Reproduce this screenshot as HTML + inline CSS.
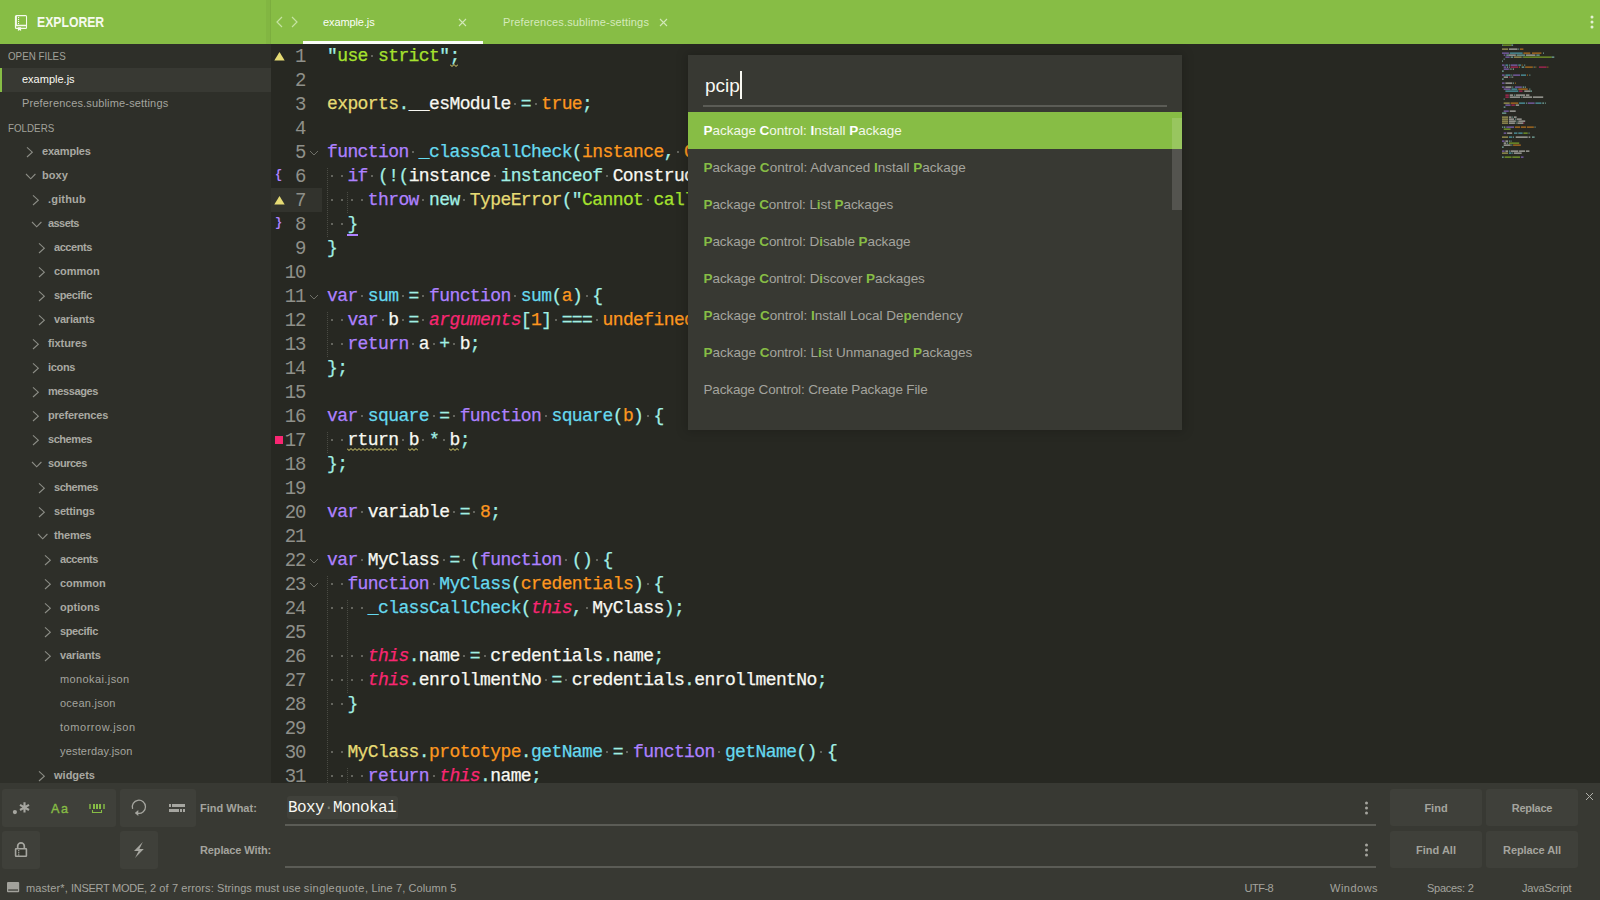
<!DOCTYPE html><html><head><meta charset="utf-8"><title>example.js</title><style>
*{margin:0;padding:0;box-sizing:border-box}
html,body{width:1600px;height:900px;overflow:hidden;background:#272822}
body{position:relative;font-family:"Liberation Sans",sans-serif;font-size:11px;color:#a4a49e}
.abs{position:absolute}
#top{left:0;top:0;width:1600px;height:44px;background:#87bd45}
#side{left:0;top:44px;width:271px;height:739px;background:#2e2f29;overflow:hidden}
#side .r{position:absolute;left:0;width:271px;height:24px;line-height:24px;white-space:nowrap}
#side .h{font-size:11px;color:#a2a29b;transform:scaleX(0.89);transform-origin:8px 50%}
#side .d{font-weight:bold;color:#a9a9a2}
#side .fl{color:#a4a49e}
#side .of{color:#a4a49e;letter-spacing:0.16px}
#side .sel{color:#f8f8f2;letter-spacing:0}
#side svg{position:absolute;top:0}
#ed{left:271px;top:44px;width:1329px;height:739px;background:#272822;overflow:hidden}
.ln{position:absolute;left:0;height:24px;line-height:24px;white-space:pre;font-family:"Liberation Mono",monospace;font-size:18px;letter-spacing:-0.6px}
.num{width:34.2px;text-align:right;color:#8f908a;font-size:19px;letter-spacing:-1.2px;transform:scaleY(1.06);transform-origin:50% 17px}
.code{left:56px;color:#f8f8f2;-webkit-text-stroke:0.25px}
.k{color:#ae81ff}.f{color:#66d9ef}.p{color:#fd971f}.s{color:#a6e22e}.y{color:#e6db74}
.c{color:#a1efe4}.t{color:#f92672;font-style:italic}.w{color:#f8f8f2}
.sp{color:#55564f}
#find{left:0;top:783px;width:1600px;height:93px;background:#383933}
#status{left:0;top:876px;width:1600px;height:24px;background:#383933;line-height:24px;color:#a4a49e}
.btn{position:absolute;background:#3f403a;border-radius:3px}
.bt{position:absolute;height:37px;line-height:39px;overflow:hidden;text-align:center;font-weight:bold;color:#a4a49e;background:#3f403a;border-radius:3px;width:92px}
.lbl{position:absolute;font-weight:bold;color:#a4a49e;left:200px;height:20px;line-height:20px}
.ul{position:absolute;left:285px;width:1091px;height:2px;background:#5b5c56}
#pal{left:688px;top:55px;width:494px;height:375px;background:#383933;box-shadow:0 0 10px 2px rgba(0,0,0,0.17);overflow:hidden}
#pal .row{position:absolute;left:0;width:494px;height:37px;line-height:37px;padding-left:15.5px;font-size:13.5px;color:#a4a49e;white-space:nowrap}
#pal .row b{color:#87bd45}
#pal .row.sel{background:#87bd45;color:#f3f8ea}
#pal .row.sel b{color:#fff}
</style></head><body>
<div id="top" class="abs">
<div class="abs" style="left:266px;top:0;width:5px;height:44px;background:rgba(0,0,0,0.035)"></div><div class="abs" style="left:270px;top:0;width:1px;height:44px;background:rgba(0,0,0,0.04)"></div>
<svg class="abs" style="left:14px;top:14px" width="14" height="18" viewBox="0 0 14 18"><g fill="#f6faef"><path fill-rule="evenodd" d="M2.4 0.9H11.6Q13.05 0.9 13.05 2.4V13.6Q13.05 15.1 11.6 15.1H2.4Q0.9 15.1 0.9 13.6V2.4Q0.9 0.9 2.4 0.9ZM2.9 2.2V10.7H12V2.2ZM2.1 12.2V13.8H12V12.2Z"/><rect x="4" y="3" width="1.1" height="1.1"/><rect x="4" y="5" width="1.1" height="1.1"/><rect x="4" y="7" width="1.1" height="1.1"/><rect x="4" y="9" width="1.1" height="1.1"/><path d="M3.9 13.3H7.1V17.1L5.5 15.9L3.9 17.1Z"/></g></svg>
<div class="abs" style="left:36.5px;top:12px;height:20px;line-height:20px;font-size:14px;font-weight:bold;color:#f6faef;transform:scaleX(0.872);transform-origin:0 50%">EXPLORER</div>
<svg class="abs" style="left:275px;top:16px" width="26" height="12" viewBox="0 0 26 12"><g fill="none" stroke="#c5e2a3" stroke-width="1.2"><path d="M7 1L2 6l5 5"/><path d="M17 1l5 5l-5 5"/></g></svg>
<div class="abs" style="left:323px;top:12px;height:20px;line-height:20px;font-size:11px;color:#fbfdf8;letter-spacing:-0.1px">example.js</div>
<svg class="abs" style="left:458px;top:18px" width="9" height="9" viewBox="0 0 9 9"><path d="M1 1l7 7M8 1l-7 7" stroke="#d2e8b8" stroke-width="1.1" fill="none"/></svg>
<div class="abs" style="left:303px;top:41px;width:180px;height:3px;background:#fbfdf8"></div>
<div class="abs" style="left:503px;top:12px;height:20px;line-height:20px;font-size:11px;color:#d5eabc;letter-spacing:0.15px">Preferences.sublime-settings</div>
<svg class="abs" style="left:659px;top:18px" width="9" height="9" viewBox="0 0 9 9"><path d="M1 1l7 7M8 1l-7 7" stroke="#d2e8b8" stroke-width="1.1" fill="none"/></svg>
<svg class="abs" style="left:1588.5px;top:13.5px" width="6" height="16" viewBox="0 0 6 16"><g fill="#e4f1d4"><circle cx="3" cy="3" r="1.5"/><circle cx="3" cy="8" r="1.5"/><circle cx="3" cy="13" r="1.5"/></g></svg>
</div>
<div id="side" class="abs">
<div class="abs" style="left:0;top:24px;width:271px;height:24px;background:#383933"></div><div class="abs" style="left:0;top:24px;width:2px;height:24px;background:#87bd45"></div>
<div class="r h" style="top:0px;padding-left:8px">OPEN FILES</div>
<div class="r of sel" style="top:23px;padding-left:22px">example.js</div>
<div class="r of" style="top:47px;padding-left:22px">Preferences.sublime-settings</div>
<div class="r h h2" style="top:72px;padding-left:8px">FOLDERS</div>
<div class="r d" style="top:95px;padding-left:42px;letter-spacing:-0.181px"><svg style="left:26.4px" width="8" height="24" viewBox="0 0 8 24"><path d="M1 8.4l5.3 4.8l-5.3 4.8" fill="none" stroke="#8c8d86" stroke-width="1.1"/></svg>examples</div>
<div class="r d" style="top:119px;padding-left:42px;letter-spacing:0.089px"><svg style="left:24.5px" width="12" height="24" viewBox="0 0 12 24"><path d="M1 11l4.7 4.8l4.7 -4.8" fill="none" stroke="#8c8d86" stroke-width="1.1"/></svg>boxy</div>
<div class="r d" style="top:143px;padding-left:48px;letter-spacing:0.176px"><svg style="left:32.4px" width="8" height="24" viewBox="0 0 8 24"><path d="M1 8.4l5.3 4.8l-5.3 4.8" fill="none" stroke="#8c8d86" stroke-width="1.1"/></svg>.github</div>
<div class="r d" style="top:167px;padding-left:48px;letter-spacing:-0.576px"><svg style="left:30.5px" width="12" height="24" viewBox="0 0 12 24"><path d="M1 11l4.7 4.8l4.7 -4.8" fill="none" stroke="#8c8d86" stroke-width="1.1"/></svg>assets</div>
<div class="r d" style="top:191px;padding-left:54px;letter-spacing:-0.444px"><svg style="left:38.4px" width="8" height="24" viewBox="0 0 8 24"><path d="M1 8.4l5.3 4.8l-5.3 4.8" fill="none" stroke="#8c8d86" stroke-width="1.1"/></svg>accents</div>
<div class="r d" style="top:215px;padding-left:54px;letter-spacing:-0.026px"><svg style="left:38.4px" width="8" height="24" viewBox="0 0 8 24"><path d="M1 8.4l5.3 4.8l-5.3 4.8" fill="none" stroke="#8c8d86" stroke-width="1.1"/></svg>common</div>
<div class="r d" style="top:239px;padding-left:54px;letter-spacing:-0.383px"><svg style="left:38.4px" width="8" height="24" viewBox="0 0 8 24"><path d="M1 8.4l5.3 4.8l-5.3 4.8" fill="none" stroke="#8c8d86" stroke-width="1.1"/></svg>specific</div>
<div class="r d" style="top:263px;padding-left:54px;letter-spacing:-0.187px"><svg style="left:38.4px" width="8" height="24" viewBox="0 0 8 24"><path d="M1 8.4l5.3 4.8l-5.3 4.8" fill="none" stroke="#8c8d86" stroke-width="1.1"/></svg>variants</div>
<div class="r d" style="top:287px;padding-left:48px;letter-spacing:-0.087px"><svg style="left:32.4px" width="8" height="24" viewBox="0 0 8 24"><path d="M1 8.4l5.3 4.8l-5.3 4.8" fill="none" stroke="#8c8d86" stroke-width="1.1"/></svg>fixtures</div>
<div class="r d" style="top:311px;padding-left:48px;letter-spacing:-0.319px"><svg style="left:32.4px" width="8" height="24" viewBox="0 0 8 24"><path d="M1 8.4l5.3 4.8l-5.3 4.8" fill="none" stroke="#8c8d86" stroke-width="1.1"/></svg>icons</div>
<div class="r d" style="top:335px;padding-left:48px;letter-spacing:-0.416px"><svg style="left:32.4px" width="8" height="24" viewBox="0 0 8 24"><path d="M1 8.4l5.3 4.8l-5.3 4.8" fill="none" stroke="#8c8d86" stroke-width="1.1"/></svg>messages</div>
<div class="r d" style="top:359px;padding-left:48px;letter-spacing:-0.207px"><svg style="left:32.4px" width="8" height="24" viewBox="0 0 8 24"><path d="M1 8.4l5.3 4.8l-5.3 4.8" fill="none" stroke="#8c8d86" stroke-width="1.1"/></svg>preferences</div>
<div class="r d" style="top:383px;padding-left:48px;letter-spacing:-0.445px"><svg style="left:32.4px" width="8" height="24" viewBox="0 0 8 24"><path d="M1 8.4l5.3 4.8l-5.3 4.8" fill="none" stroke="#8c8d86" stroke-width="1.1"/></svg>schemes</div>
<div class="r d" style="top:407px;padding-left:48px;letter-spacing:-0.477px"><svg style="left:30.5px" width="12" height="24" viewBox="0 0 12 24"><path d="M1 11l4.7 4.8l4.7 -4.8" fill="none" stroke="#8c8d86" stroke-width="1.1"/></svg>sources</div>
<div class="r d" style="top:431px;padding-left:54px;letter-spacing:-0.445px"><svg style="left:38.4px" width="8" height="24" viewBox="0 0 8 24"><path d="M1 8.4l5.3 4.8l-5.3 4.8" fill="none" stroke="#8c8d86" stroke-width="1.1"/></svg>schemes</div>
<div class="r d" style="top:455px;padding-left:54px;letter-spacing:-0.185px"><svg style="left:38.4px" width="8" height="24" viewBox="0 0 8 24"><path d="M1 8.4l5.3 4.8l-5.3 4.8" fill="none" stroke="#8c8d86" stroke-width="1.1"/></svg>settings</div>
<div class="r d" style="top:479px;padding-left:54px;letter-spacing:-0.206px"><svg style="left:36.5px" width="12" height="24" viewBox="0 0 12 24"><path d="M1 11l4.7 4.8l4.7 -4.8" fill="none" stroke="#8c8d86" stroke-width="1.1"/></svg>themes</div>
<div class="r d" style="top:503px;padding-left:60px;letter-spacing:-0.444px"><svg style="left:44.4px" width="8" height="24" viewBox="0 0 8 24"><path d="M1 8.4l5.3 4.8l-5.3 4.8" fill="none" stroke="#8c8d86" stroke-width="1.1"/></svg>accents</div>
<div class="r d" style="top:527px;padding-left:60px;letter-spacing:-0.026px"><svg style="left:44.4px" width="8" height="24" viewBox="0 0 8 24"><path d="M1 8.4l5.3 4.8l-5.3 4.8" fill="none" stroke="#8c8d86" stroke-width="1.1"/></svg>common</div>
<div class="r d" style="top:551px;padding-left:60px;letter-spacing:0.043px"><svg style="left:44.4px" width="8" height="24" viewBox="0 0 8 24"><path d="M1 8.4l5.3 4.8l-5.3 4.8" fill="none" stroke="#8c8d86" stroke-width="1.1"/></svg>options</div>
<div class="r d" style="top:575px;padding-left:60px;letter-spacing:-0.383px"><svg style="left:44.4px" width="8" height="24" viewBox="0 0 8 24"><path d="M1 8.4l5.3 4.8l-5.3 4.8" fill="none" stroke="#8c8d86" stroke-width="1.1"/></svg>specific</div>
<div class="r d" style="top:599px;padding-left:60px;letter-spacing:-0.187px"><svg style="left:44.4px" width="8" height="24" viewBox="0 0 8 24"><path d="M1 8.4l5.3 4.8l-5.3 4.8" fill="none" stroke="#8c8d86" stroke-width="1.1"/></svg>variants</div>
<div class="r fl" style="top:623px;padding-left:60px;letter-spacing:0.398px">monokai.json</div>
<div class="r fl" style="top:647px;padding-left:60px;letter-spacing:0.251px">ocean.json</div>
<div class="r fl" style="top:671px;padding-left:60px;letter-spacing:0.545px">tomorrow.json</div>
<div class="r fl" style="top:695px;padding-left:60px;letter-spacing:0.170px">yesterday.json</div>
<div class="r d" style="top:719px;padding-left:54px;letter-spacing:0.007px"><svg style="left:38.4px" width="8" height="24" viewBox="0 0 8 24"><path d="M1 8.4l5.3 4.8l-5.3 4.8" fill="none" stroke="#8c8d86" stroke-width="1.1"/></svg>widgets</div>
</div>
<div id="ed" class="abs">
<div class="abs" style="left:0;top:144px;width:51px;height:24px;background:#32332d"></div>
<div class="ln num" style="top:1px">1</div>
<div class="ln code" style="top:0px"><span class="c">&quot;</span><span class="s">use strict</span><span class="c">&quot;;</span></div>
<div class="ln num" style="top:25px">2</div>
<div class="ln num" style="top:49px">3</div>
<div class="ln code" style="top:48px"><span class="y">exports</span><span class="c">.</span><span class="w">__esModule</span><span class="c"> = </span><span class="p">true</span><span class="c">;</span></div>
<div class="ln num" style="top:73px">4</div>
<div class="ln num" style="top:97px">5</div>
<div class="ln code" style="top:96px"><span class="k">function</span> <span class="f">_classCallCheck</span><span class="c">(</span><span class="p">instance</span><span class="c">, </span><span class="p">Constructor</span><span class="c">) {</span></div>
<div class="ln num" style="top:121px">6</div>
<div class="ln code" style="top:120px">  <span class="k">if</span><span class="c"> (!(</span><span class="w">instance</span><span class="c"> instanceof </span><span class="w">Constructor</span><span class="c">)) {</span></div>
<div class="ln num" style="top:145px">7</div>
<div class="ln code" style="top:144px">    <span class="k">throw</span><span class="c"> new </span><span class="y">TypeError</span><span class="c">(&quot;</span><span class="s">Cannot call a class as a function</span><span class="c">&quot;);</span></div>
<div class="ln num" style="top:169px">8</div>
<div class="ln code" style="top:168px">  <span class="c ub">}</span></div>
<div class="ln num" style="top:193px">9</div>
<div class="ln code" style="top:192px"><span class="c">}</span></div>
<div class="ln num" style="top:217px">10</div>
<div class="ln num" style="top:241px">11</div>
<div class="ln code" style="top:240px"><span class="k">var</span> <span class="f">sum</span><span class="c"> = </span><span class="k">function</span> <span class="f">sum</span><span class="c">(</span><span class="p">a</span><span class="c">) {</span></div>
<div class="ln num" style="top:265px">12</div>
<div class="ln code" style="top:264px">  <span class="k">var</span> <span class="w">b</span><span class="c"> = </span><span class="t">arguments</span><span class="c">[</span><span class="p">1</span><span class="c">] === </span><span class="p">undefined</span><span class="c"> ? </span><span class="p">2</span><span class="c"> : </span><span class="t">arguments</span><span class="c">[</span><span class="p">1</span><span class="c">];</span></div>
<div class="ln num" style="top:289px">13</div>
<div class="ln code" style="top:288px">  <span class="k">return</span> <span class="w">a</span><span class="c"> + </span><span class="w">b</span><span class="c">;</span></div>
<div class="ln num" style="top:313px">14</div>
<div class="ln code" style="top:312px"><span class="c">};</span></div>
<div class="ln num" style="top:337px">15</div>
<div class="ln num" style="top:361px">16</div>
<div class="ln code" style="top:360px"><span class="k">var</span> <span class="f">square</span><span class="c"> = </span><span class="k">function</span> <span class="f">square</span><span class="c">(</span><span class="p">b</span><span class="c">) {</span></div>
<div class="ln num" style="top:385px">17</div>
<div class="ln code" style="top:384px">  <span class="w sq">rturn</span> <span class="w sq">b</span><span class="c"> * </span><span class="w sq">b</span><span class="c">;</span></div>
<div class="ln num" style="top:409px">18</div>
<div class="ln code" style="top:408px"><span class="c">};</span></div>
<div class="ln num" style="top:433px">19</div>
<div class="ln num" style="top:457px">20</div>
<div class="ln code" style="top:456px"><span class="k">var</span> <span class="w">variable</span><span class="c"> = </span><span class="p">8</span><span class="c">;</span></div>
<div class="ln num" style="top:481px">21</div>
<div class="ln num" style="top:505px">22</div>
<div class="ln code" style="top:504px"><span class="k">var</span> <span class="w">MyClass</span><span class="c"> = (</span><span class="k">function</span><span class="c"> () {</span></div>
<div class="ln num" style="top:529px">23</div>
<div class="ln code" style="top:528px">  <span class="k">function</span> <span class="f">MyClass</span><span class="c">(</span><span class="p">credentials</span><span class="c">) {</span></div>
<div class="ln num" style="top:553px">24</div>
<div class="ln code" style="top:552px">    <span class="f">_classCallCheck</span><span class="c">(</span><span class="t">this</span><span class="c">, </span><span class="w">MyClass</span><span class="c">);</span></div>
<div class="ln num" style="top:577px">25</div>
<div class="ln num" style="top:601px">26</div>
<div class="ln code" style="top:600px">    <span class="t">this</span><span class="c">.</span><span class="w">name</span><span class="c"> = </span><span class="w">credentials</span><span class="c">.</span><span class="w">name</span><span class="c">;</span></div>
<div class="ln num" style="top:625px">27</div>
<div class="ln code" style="top:624px">    <span class="t">this</span><span class="c">.</span><span class="w">enrollmentNo</span><span class="c"> = </span><span class="w">credentials</span><span class="c">.</span><span class="w">enrollmentNo</span><span class="c">;</span></div>
<div class="ln num" style="top:649px">28</div>
<div class="ln code" style="top:648px">  <span class="c">}</span></div>
<div class="ln num" style="top:673px">29</div>
<div class="ln num" style="top:697px">30</div>
<div class="ln code" style="top:696px">  <span class="y">MyClass</span><span class="c">.</span><span class="p">prototype</span><span class="c">.</span><span class="f">getName</span><span class="c"> = </span><span class="k">function</span> <span class="f">getName</span><span class="c">() {</span></div>
<div class="ln num" style="top:721px">31</div>
<div class="ln code" style="top:720px">    <span class="k">return</span> <span class="t">this</span><span class="c">.</span><span class="w">name</span><span class="c">;</span></div>
<div class="abs" style="left:56px;top:124px;width:1px;height:69px;background:repeating-linear-gradient(to bottom,#4a4b44 0,#4a4b44 1px,transparent 1px,transparent 2px)"></div>
<div class="abs" style="left:76px;top:148px;width:1px;height:21px;background:repeating-linear-gradient(to bottom,#4a4b44 0,#4a4b44 1px,transparent 1px,transparent 2px)"></div>
<div class="abs" style="left:56px;top:268px;width:1px;height:45px;background:repeating-linear-gradient(to bottom,#4a4b44 0,#4a4b44 1px,transparent 1px,transparent 2px)"></div>
<div class="abs" style="left:56px;top:388px;width:1px;height:21px;background:repeating-linear-gradient(to bottom,#4a4b44 0,#4a4b44 1px,transparent 1px,transparent 2px)"></div>
<div class="abs" style="left:56px;top:532px;width:1px;height:213px;background:repeating-linear-gradient(to bottom,#4a4b44 0,#4a4b44 1px,transparent 1px,transparent 2px)"></div>
<div class="abs" style="left:76px;top:556px;width:1px;height:93px;background:repeating-linear-gradient(to bottom,#4a4b44 0,#4a4b44 1px,transparent 1px,transparent 2px)"></div>
<div class="abs" style="left:76px;top:724px;width:1px;height:21px;background:repeating-linear-gradient(to bottom,#4a4b44 0,#4a4b44 1px,transparent 1px,transparent 2px)"></div>
<svg class="abs" style="left:2.7px;top:7.7px" width="11" height="9" viewBox="0 0 11 9"><path d="M5.5 0L10.7 8.5H0.3z" fill="#e6db74"/></svg>
<svg class="abs" style="left:2.7px;top:151.7px" width="11" height="9" viewBox="0 0 11 9"><path d="M5.5 0L10.7 8.5H0.3z" fill="#e6db74"/></svg>
<div class="abs" style="left:4px;top:392px;width:8px;height:8px;background:#f92672"></div>
<div class="abs" style="left:4px;top:120px;height:24px;line-height:22px;font-family:'Liberation Mono',monospace;font-size:12px;font-weight:bold;color:#ae81ff">{</div>
<div class="abs" style="left:4px;top:168px;height:24px;line-height:22px;font-family:'Liberation Mono',monospace;font-size:12px;font-weight:bold;color:#ae81ff">}</div>
<svg class="abs" style="left:38px;top:106px" width="10" height="6" viewBox="0 0 10 6"><path d="M1 1l4 4l4 -4" fill="none" stroke="#6e6f68" stroke-width="1"/></svg>
<svg class="abs" style="left:38px;top:250px" width="10" height="6" viewBox="0 0 10 6"><path d="M1 1l4 4l4 -4" fill="none" stroke="#6e6f68" stroke-width="1"/></svg>
<svg class="abs" style="left:38px;top:514px" width="10" height="6" viewBox="0 0 10 6"><path d="M1 1l4 4l4 -4" fill="none" stroke="#6e6f68" stroke-width="1"/></svg>
<svg class="abs" style="left:38px;top:538px" width="10" height="6" viewBox="0 0 10 6"><path d="M1 1l4 4l4 -4" fill="none" stroke="#6e6f68" stroke-width="1"/></svg>
<svg class="abs" style="left:179px;top:20px" width="8" height="3" viewBox="0 0 8 3"><polyline points="0,0.5 2,2.5 4,0.5 6,2.5 8,0.5" fill="none" stroke="#e6db74" stroke-width="1"/></svg>
<svg class="abs" style="left:76px;top:404px" width="50" height="3" viewBox="0 0 50 3"><polyline points="0,0.5 2,2.5 4,0.5 6,2.5 8,0.5 10,2.5 12,0.5 14,2.5 16,0.5 18,2.5 20,0.5 22,2.5 24,0.5 26,2.5 28,0.5 30,2.5 32,0.5 34,2.5 36,0.5 38,2.5 40,0.5 42,2.5 44,0.5 46,2.5 48,0.5 50,2.5" fill="none" stroke="#e6db74" stroke-width="1"/></svg>
<svg class="abs" style="left:137px;top:404px" width="10" height="3" viewBox="0 0 10 3"><polyline points="0,0.5 2,2.5 4,0.5 6,2.5 8,0.5 10,2.5" fill="none" stroke="#e6db74" stroke-width="1"/></svg>
<svg class="abs" style="left:178px;top:404px" width="10" height="3" viewBox="0 0 10 3"><polyline points="0,0.5 2,2.5 4,0.5 6,2.5 8,0.5 10,2.5" fill="none" stroke="#e6db74" stroke-width="1"/></svg>
<div class="abs" style="left:76px;top:190px;width:11px;height:1.5px;background:#ae81ff"></div>
<div class="abs" style="left:0;top:11px;width:2px;height:2px;margin-left:-2px;box-shadow:102px 0 0 #63645d"></div>
<div class="abs" style="left:0;top:59px;width:2px;height:2px;margin-left:-2px;box-shadow:245px 0 0 #63645d,266px 0 0 #63645d"></div>
<div class="abs" style="left:0;top:107px;width:2px;height:2px;margin-left:-2px;box-shadow:143px 0 0 #63645d,408px 0 0 #63645d,541px 0 0 #63645d"></div>
<div class="abs" style="left:0;top:131px;width:2px;height:2px;margin-left:-2px;box-shadow:62px 0 0 #63645d,72px 0 0 #63645d,102px 0 0 #63645d,225px 0 0 #63645d,337px 0 0 #63645d,480px 0 0 #63645d"></div>
<div class="abs" style="left:0;top:155px;width:2px;height:2px;margin-left:-2px;box-shadow:62px 0 0 #63645d,72px 0 0 #63645d,82px 0 0 #63645d,92px 0 0 #63645d,153px 0 0 #63645d,194px 0 0 #63645d,378px 0 0 #63645d,429px 0 0 #63645d,449px 0 0 #63645d,510px 0 0 #63645d,541px 0 0 #63645d,561px 0 0 #63645d"></div>
<div class="abs" style="left:0;top:179px;width:2px;height:2px;margin-left:-2px;box-shadow:62px 0 0 #63645d,72px 0 0 #63645d"></div>
<div class="abs" style="left:0;top:251px;width:2px;height:2px;margin-left:-2px;box-shadow:92px 0 0 #63645d,133px 0 0 #63645d,153px 0 0 #63645d,245px 0 0 #63645d,317px 0 0 #63645d"></div>
<div class="abs" style="left:0;top:275px;width:2px;height:2px;margin-left:-2px;box-shadow:62px 0 0 #63645d,72px 0 0 #63645d,113px 0 0 #63645d,133px 0 0 #63645d,153px 0 0 #63645d,286px 0 0 #63645d,327px 0 0 #63645d,429px 0 0 #63645d,449px 0 0 #63645d,470px 0 0 #63645d,490px 0 0 #63645d"></div>
<div class="abs" style="left:0;top:299px;width:2px;height:2px;margin-left:-2px;box-shadow:62px 0 0 #63645d,72px 0 0 #63645d,143px 0 0 #63645d,164px 0 0 #63645d,184px 0 0 #63645d"></div>
<div class="abs" style="left:0;top:371px;width:2px;height:2px;margin-left:-2px;box-shadow:92px 0 0 #63645d,164px 0 0 #63645d,184px 0 0 #63645d,276px 0 0 #63645d,378px 0 0 #63645d"></div>
<div class="abs" style="left:0;top:395px;width:2px;height:2px;margin-left:-2px;box-shadow:62px 0 0 #63645d,72px 0 0 #63645d,133px 0 0 #63645d,153px 0 0 #63645d,174px 0 0 #63645d"></div>
<div class="abs" style="left:0;top:467px;width:2px;height:2px;margin-left:-2px;box-shadow:92px 0 0 #63645d,184px 0 0 #63645d,204px 0 0 #63645d"></div>
<div class="abs" style="left:0;top:515px;width:2px;height:2px;margin-left:-2px;box-shadow:92px 0 0 #63645d,174px 0 0 #63645d,194px 0 0 #63645d,296px 0 0 #63645d,327px 0 0 #63645d"></div>
<div class="abs" style="left:0;top:539px;width:2px;height:2px;margin-left:-2px;box-shadow:62px 0 0 #63645d,72px 0 0 #63645d,164px 0 0 #63645d,378px 0 0 #63645d"></div>
<div class="abs" style="left:0;top:563px;width:2px;height:2px;margin-left:-2px;box-shadow:62px 0 0 #63645d,72px 0 0 #63645d,82px 0 0 #63645d,92px 0 0 #63645d,317px 0 0 #63645d"></div>
<div class="abs" style="left:0;top:611px;width:2px;height:2px;margin-left:-2px;box-shadow:62px 0 0 #63645d,72px 0 0 #63645d,82px 0 0 #63645d,92px 0 0 #63645d,194px 0 0 #63645d,215px 0 0 #63645d"></div>
<div class="abs" style="left:0;top:635px;width:2px;height:2px;margin-left:-2px;box-shadow:62px 0 0 #63645d,72px 0 0 #63645d,82px 0 0 #63645d,92px 0 0 #63645d,276px 0 0 #63645d,296px 0 0 #63645d"></div>
<div class="abs" style="left:0;top:659px;width:2px;height:2px;margin-left:-2px;box-shadow:62px 0 0 #63645d,72px 0 0 #63645d"></div>
<div class="abs" style="left:0;top:707px;width:2px;height:2px;margin-left:-2px;box-shadow:62px 0 0 #63645d,72px 0 0 #63645d,337px 0 0 #63645d,357px 0 0 #63645d,449px 0 0 #63645d,551px 0 0 #63645d"></div>
<div class="abs" style="left:0;top:731px;width:2px;height:2px;margin-left:-2px;box-shadow:62px 0 0 #63645d,72px 0 0 #63645d,82px 0 0 #63645d,92px 0 0 #63645d,164px 0 0 #63645d"></div>
</div><svg class="abs" style="left:1502px;top:44px;opacity:0.55" width="64" height="116" viewBox="0 0 64 116"><rect x="0.0" y="0.4" width="0.9" height="1.5" fill="#a1efe4"/><rect x="0.9" y="0.4" width="8.6" height="1.5" fill="#a6e22e"/><rect x="9.4" y="0.4" width="1.7" height="1.5" fill="#a1efe4"/><rect x="0.0" y="4.4" width="6.0" height="1.5" fill="#e6db74"/><rect x="6.9" y="4.4" width="8.6" height="1.5" fill="#f8f8f2"/><rect x="16.3" y="4.4" width="0.9" height="1.5" fill="#a1efe4"/><rect x="18.0" y="4.4" width="3.4" height="1.5" fill="#fd971f"/><rect x="0.0" y="8.4" width="6.9" height="1.5" fill="#ae81ff"/><rect x="7.7" y="8.4" width="12.9" height="1.5" fill="#66d9ef"/><rect x="21.4" y="8.4" width="6.9" height="1.5" fill="#fd971f"/><rect x="30.0" y="8.4" width="9.4" height="1.5" fill="#fd971f"/><rect x="41.1" y="8.4" width="0.9" height="1.5" fill="#a1efe4"/><rect x="1.7" y="10.4" width="1.7" height="1.5" fill="#ae81ff"/><rect x="4.3" y="10.4" width="2.6" height="1.5" fill="#a1efe4"/><rect x="6.9" y="10.4" width="6.9" height="1.5" fill="#f8f8f2"/><rect x="14.6" y="10.4" width="8.6" height="1.5" fill="#a1efe4"/><rect x="24.0" y="10.4" width="9.4" height="1.5" fill="#f8f8f2"/><rect x="34.3" y="10.4" width="3.4" height="1.5" fill="#a1efe4"/><rect x="3.4" y="12.4" width="4.3" height="1.5" fill="#ae81ff"/><rect x="8.6" y="12.4" width="2.6" height="1.5" fill="#a1efe4"/><rect x="12.0" y="12.4" width="7.7" height="1.5" fill="#e6db74"/><rect x="20.6" y="12.4" width="0.9" height="1.5" fill="#a1efe4"/><rect x="21.4" y="12.4" width="28.3" height="1.5" fill="#a6e22e"/><rect x="49.7" y="12.4" width="2.6" height="1.5" fill="#a1efe4"/><rect x="1.7" y="14.4" width="0.9" height="1.5" fill="#a1efe4"/><rect x="0.0" y="16.4" width="0.9" height="1.5" fill="#a1efe4"/><rect x="0.0" y="20.4" width="2.6" height="1.5" fill="#ae81ff"/><rect x="3.4" y="20.4" width="2.6" height="1.5" fill="#66d9ef"/><rect x="6.9" y="20.4" width="0.9" height="1.5" fill="#a1efe4"/><rect x="8.6" y="20.4" width="6.9" height="1.5" fill="#ae81ff"/><rect x="16.3" y="20.4" width="2.6" height="1.5" fill="#66d9ef"/><rect x="19.7" y="20.4" width="0.9" height="1.5" fill="#fd971f"/><rect x="22.3" y="20.4" width="0.9" height="1.5" fill="#a1efe4"/><rect x="1.7" y="22.4" width="2.6" height="1.5" fill="#ae81ff"/><rect x="5.1" y="22.4" width="0.9" height="1.5" fill="#f8f8f2"/><rect x="6.9" y="22.4" width="0.9" height="1.5" fill="#a1efe4"/><rect x="8.6" y="22.4" width="7.7" height="1.5" fill="#f92672"/><rect x="17.1" y="22.4" width="0.9" height="1.5" fill="#fd971f"/><rect x="19.7" y="22.4" width="2.6" height="1.5" fill="#a1efe4"/><rect x="23.1" y="22.4" width="7.7" height="1.5" fill="#fd971f"/><rect x="31.7" y="22.4" width="0.9" height="1.5" fill="#a1efe4"/><rect x="33.4" y="22.4" width="0.9" height="1.5" fill="#fd971f"/><rect x="36.9" y="22.4" width="7.7" height="1.5" fill="#f92672"/><rect x="45.4" y="22.4" width="0.9" height="1.5" fill="#fd971f"/><rect x="1.7" y="24.4" width="5.1" height="1.5" fill="#ae81ff"/><rect x="7.7" y="24.4" width="0.9" height="1.5" fill="#f8f8f2"/><rect x="9.4" y="24.4" width="0.9" height="1.5" fill="#a1efe4"/><rect x="11.1" y="24.4" width="0.9" height="1.5" fill="#f8f8f2"/><rect x="0.0" y="26.4" width="1.7" height="1.5" fill="#a1efe4"/><rect x="0.0" y="30.4" width="2.6" height="1.5" fill="#ae81ff"/><rect x="3.4" y="30.4" width="5.1" height="1.5" fill="#66d9ef"/><rect x="9.4" y="30.4" width="0.9" height="1.5" fill="#a1efe4"/><rect x="11.1" y="30.4" width="6.9" height="1.5" fill="#ae81ff"/><rect x="18.9" y="30.4" width="5.1" height="1.5" fill="#66d9ef"/><rect x="24.9" y="30.4" width="0.9" height="1.5" fill="#fd971f"/><rect x="27.4" y="30.4" width="0.9" height="1.5" fill="#a1efe4"/><rect x="1.7" y="32.4" width="4.3" height="1.5" fill="#f8f8f2"/><rect x="6.9" y="32.4" width="0.9" height="1.5" fill="#f92672"/><rect x="8.6" y="32.4" width="0.9" height="1.5" fill="#a1efe4"/><rect x="10.3" y="32.4" width="0.9" height="1.5" fill="#f8f8f2"/><rect x="0.0" y="34.4" width="1.7" height="1.5" fill="#a1efe4"/><rect x="0.0" y="38.4" width="2.6" height="1.5" fill="#ae81ff"/><rect x="3.4" y="38.4" width="6.9" height="1.5" fill="#f8f8f2"/><rect x="11.1" y="38.4" width="0.9" height="1.5" fill="#a1efe4"/><rect x="12.9" y="38.4" width="0.9" height="1.5" fill="#fd971f"/><rect x="0.0" y="42.4" width="2.6" height="1.5" fill="#ae81ff"/><rect x="3.4" y="42.4" width="6.0" height="1.5" fill="#f8f8f2"/><rect x="10.3" y="42.4" width="0.9" height="1.5" fill="#a1efe4"/><rect x="12.9" y="42.4" width="6.9" height="1.5" fill="#ae81ff"/><rect x="20.6" y="42.4" width="1.7" height="1.5" fill="#a1efe4"/><rect x="23.1" y="42.4" width="0.9" height="1.5" fill="#a1efe4"/><rect x="1.7" y="44.4" width="6.9" height="1.5" fill="#ae81ff"/><rect x="9.4" y="44.4" width="6.0" height="1.5" fill="#66d9ef"/><rect x="16.3" y="44.4" width="9.4" height="1.5" fill="#fd971f"/><rect x="27.4" y="44.4" width="0.9" height="1.5" fill="#a1efe4"/><rect x="3.4" y="46.4" width="12.9" height="1.5" fill="#66d9ef"/><rect x="17.1" y="46.4" width="3.4" height="1.5" fill="#f92672"/><rect x="22.3" y="46.4" width="6.0" height="1.5" fill="#f8f8f2"/><rect x="28.3" y="46.4" width="1.7" height="1.5" fill="#a1efe4"/><rect x="3.4" y="50.4" width="3.4" height="1.5" fill="#f92672"/><rect x="7.7" y="50.4" width="3.4" height="1.5" fill="#f8f8f2"/><rect x="12.0" y="50.4" width="0.9" height="1.5" fill="#a1efe4"/><rect x="13.7" y="50.4" width="9.4" height="1.5" fill="#f8f8f2"/><rect x="24.0" y="50.4" width="3.4" height="1.5" fill="#f8f8f2"/><rect x="3.4" y="52.4" width="3.4" height="1.5" fill="#f92672"/><rect x="7.7" y="52.4" width="10.3" height="1.5" fill="#f8f8f2"/><rect x="18.9" y="52.4" width="0.9" height="1.5" fill="#a1efe4"/><rect x="20.6" y="52.4" width="9.4" height="1.5" fill="#f8f8f2"/><rect x="30.9" y="52.4" width="10.3" height="1.5" fill="#f8f8f2"/><rect x="1.7" y="54.4" width="0.9" height="1.5" fill="#a1efe4"/><rect x="1.7" y="58.4" width="6.0" height="1.5" fill="#e6db74"/><rect x="8.6" y="58.4" width="7.7" height="1.5" fill="#fd971f"/><rect x="17.1" y="58.4" width="6.0" height="1.5" fill="#66d9ef"/><rect x="24.0" y="58.4" width="0.9" height="1.5" fill="#a1efe4"/><rect x="25.7" y="58.4" width="6.9" height="1.5" fill="#ae81ff"/><rect x="33.4" y="58.4" width="6.0" height="1.5" fill="#66d9ef"/><rect x="40.3" y="58.4" width="1.7" height="1.5" fill="#a1efe4"/><rect x="42.9" y="58.4" width="0.9" height="1.5" fill="#a1efe4"/><rect x="3.4" y="60.4" width="5.1" height="1.5" fill="#ae81ff"/><rect x="9.4" y="60.4" width="3.4" height="1.5" fill="#f92672"/><rect x="13.7" y="60.4" width="3.4" height="1.5" fill="#f8f8f2"/><rect x="1.7" y="62.4" width="1.7" height="1.5" fill="#a1efe4"/><rect x="1.7" y="66.4" width="5.1" height="1.5" fill="#ae81ff"/><rect x="7.7" y="66.4" width="6.0" height="1.5" fill="#f8f8f2"/><rect x="0.0" y="68.4" width="4.3" height="1.5" fill="#a1efe4"/><rect x="0.0" y="72.4" width="6.0" height="1.5" fill="#e6db74"/><rect x="6.9" y="72.4" width="2.6" height="1.5" fill="#f8f8f2"/><rect x="10.3" y="72.4" width="0.9" height="1.5" fill="#a1efe4"/><rect x="12.0" y="72.4" width="2.6" height="1.5" fill="#f8f8f2"/><rect x="0.0" y="74.4" width="6.0" height="1.5" fill="#e6db74"/><rect x="6.9" y="74.4" width="5.1" height="1.5" fill="#f8f8f2"/><rect x="12.9" y="74.4" width="0.9" height="1.5" fill="#a1efe4"/><rect x="14.6" y="74.4" width="5.1" height="1.5" fill="#f8f8f2"/><rect x="0.0" y="76.4" width="6.0" height="1.5" fill="#e6db74"/><rect x="6.9" y="76.4" width="6.9" height="1.5" fill="#f8f8f2"/><rect x="14.6" y="76.4" width="0.9" height="1.5" fill="#a1efe4"/><rect x="16.3" y="76.4" width="6.9" height="1.5" fill="#f8f8f2"/><rect x="0.0" y="78.4" width="6.0" height="1.5" fill="#e6db74"/><rect x="6.9" y="78.4" width="6.0" height="1.5" fill="#f8f8f2"/><rect x="13.7" y="78.4" width="0.9" height="1.5" fill="#a1efe4"/><rect x="15.4" y="78.4" width="6.0" height="1.5" fill="#f8f8f2"/><rect x="21.4" y="78.4" width="0.9" height="1.5" fill="#f92672"/><rect x="0.0" y="82.4" width="0.9" height="1.5" fill="#a1efe4"/><rect x="1.7" y="82.4" width="1.7" height="1.5" fill="#a1efe4"/><rect x="4.3" y="82.4" width="7.7" height="1.5" fill="#ae81ff"/><rect x="12.9" y="82.4" width="5.1" height="1.5" fill="#fd971f"/><rect x="18.9" y="82.4" width="5.1" height="1.5" fill="#fd971f"/><rect x="24.9" y="82.4" width="6.9" height="1.5" fill="#fd971f"/><rect x="32.6" y="82.4" width="0.9" height="1.5" fill="#a1efe4"/><rect x="1.7" y="84.4" width="6.9" height="1.5" fill="#a6e22e"/><rect x="1.7" y="88.4" width="2.6" height="1.5" fill="#ae81ff"/><rect x="5.1" y="88.4" width="5.1" height="1.5" fill="#f8f8f2"/><rect x="12.0" y="88.4" width="3.4" height="1.5" fill="#66d9ef"/><rect x="16.3" y="88.4" width="4.3" height="1.5" fill="#66d9ef"/><rect x="21.4" y="88.4" width="4.3" height="1.5" fill="#a6e22e"/><rect x="26.6" y="88.4" width="0.9" height="1.5" fill="#a1efe4"/><rect x="0.0" y="92.4" width="6.0" height="1.5" fill="#e6db74"/><rect x="6.9" y="92.4" width="3.4" height="1.5" fill="#66d9ef"/><rect x="11.1" y="92.4" width="0.9" height="1.5" fill="#a1efe4"/><rect x="13.7" y="92.4" width="12.0" height="1.5" fill="#f8f8f2"/><rect x="26.6" y="92.4" width="1.7" height="1.5" fill="#f8f8f2"/><rect x="30.0" y="92.4" width="2.6" height="1.5" fill="#a1efe4"/><rect x="0.0" y="96.4" width="2.6" height="1.5" fill="#ae81ff"/><rect x="3.4" y="96.4" width="2.6" height="1.5" fill="#f8f8f2"/><rect x="6.9" y="96.4" width="0.9" height="1.5" fill="#a1efe4"/><rect x="8.6" y="96.4" width="0.9" height="1.5" fill="#a1efe4"/><rect x="1.7" y="98.4" width="2.6" height="1.5" fill="#f8f8f2"/><rect x="5.1" y="98.4" width="0.9" height="1.5" fill="#a1efe4"/><rect x="6.9" y="98.4" width="10.3" height="1.5" fill="#a6e22e"/><rect x="1.7" y="100.4" width="6.9" height="1.5" fill="#f8f8f2"/><rect x="9.4" y="100.4" width="0.9" height="1.5" fill="#a1efe4"/><rect x="11.1" y="100.4" width="7.7" height="1.5" fill="#fd971f"/><rect x="0.0" y="102.4" width="1.7" height="1.5" fill="#a1efe4"/><rect x="0.0" y="106.4" width="2.6" height="1.5" fill="#ae81ff"/><rect x="3.4" y="106.4" width="2.6" height="1.5" fill="#f8f8f2"/><rect x="6.9" y="106.4" width="0.9" height="1.5" fill="#a1efe4"/><rect x="8.6" y="106.4" width="7.7" height="1.5" fill="#f8f8f2"/><rect x="17.1" y="106.4" width="6.0" height="1.5" fill="#f8f8f2"/><rect x="24.0" y="106.4" width="3.4" height="1.5" fill="#f8f8f2"/><rect x="0.0" y="108.4" width="6.0" height="1.5" fill="#e6db74"/><rect x="6.9" y="108.4" width="2.6" height="1.5" fill="#66d9ef"/><rect x="10.3" y="108.4" width="0.9" height="1.5" fill="#a1efe4"/><rect x="12.0" y="108.4" width="7.7" height="1.5" fill="#f8f8f2"/><rect x="0.0" y="112.4" width="1.7" height="1.5" fill="#a1efe4"/><rect x="2.6" y="112.4" width="6.9" height="1.5" fill="#a6e22e"/><rect x="10.3" y="112.4" width="7.7" height="1.5" fill="#a6e22e"/><rect x="18.9" y="112.4" width="2.6" height="1.5" fill="#ae81ff"/></svg>
<div id="pal" class="abs">
<div class="abs" style="left:17px;top:15px;height:32px;line-height:32px;font-size:19px;color:#f8f8f2">pcip</div>
<div class="abs" style="left:52px;top:16px;width:2px;height:28px;background:#f8f8f2"></div>
<div class="abs" style="left:15px;top:50px;width:464px;height:2px;background:#5b5c56"></div>
<div class="row sel" style="top:57px;letter-spacing:-0.024px"><b>P</b>ackage <b>C</b>ontrol: <b>I</b>nstall <b>P</b>ackage</div>
<div class="row" style="top:94px;letter-spacing:0.007px"><b>P</b>ackage <b>C</b>ontrol: Advanced <b>I</b>nstall <b>P</b>ackage</div>
<div class="row" style="top:131px;letter-spacing:-0.083px"><b>P</b>ackage <b>C</b>ontrol: L<b>i</b>st <b>P</b>ackages</div>
<div class="row" style="top:168px;letter-spacing:-0.074px"><b>P</b>ackage <b>C</b>ontrol: D<b>i</b>sable <b>P</b>ackage</div>
<div class="row" style="top:205px;letter-spacing:-0.070px"><b>P</b>ackage <b>C</b>ontrol: D<b>i</b>scover <b>P</b>ackages</div>
<div class="row" style="top:242px;letter-spacing:0.011px"><b>P</b>ackage <b>C</b>ontrol: <b>I</b>nstall Local De<b>p</b>endency</div>
<div class="row" style="top:279px;letter-spacing:-0.020px"><b>P</b>ackage <b>C</b>ontrol: L<b>i</b>st Unmanaged <b>P</b>ackages</div>
<div class="row" style="top:316px;letter-spacing:-0.156px">Package Control: Create Package File</div>
<div class="abs" style="left:484px;top:63px;width:10px;height:92px;background:rgba(255,255,255,0.14)"></div>
</div>
<div id="find" class="abs">
<div class="btn" style="left:2px;top:6px;width:114px;height:38px"></div>
<div class="btn" style="left:120px;top:6px;width:76px;height:38px"></div>
<div class="btn" style="left:2px;top:48px;width:38px;height:38px"></div>
<div class="btn" style="left:120px;top:48px;width:38px;height:38px"></div>
<svg class="abs" style="left:0;top:0" width="200" height="93" viewBox="0 0 200 93"><circle cx="14.9" cy="29.1" r="2.1" fill="#a6a6a0"/><path d="M24.50 19.20L24.50 29.60M20.00 21.80L29.00 27.00M29.00 21.80L20.00 27.00" stroke="#a6a6a0" stroke-width="2.1" fill="none"/><g fill="#87bd45"><rect x="89" y="21" width="2" height="5" opacity="0.7"/><rect x="93" y="21" width="2" height="5" opacity="1"/><rect x="96" y="21" width="2" height="5" opacity="1"/><rect x="99" y="21" width="2" height="5" opacity="1"/><rect x="103" y="21" width="2" height="5" opacity="0.7"/></g><path d="M92.5 27v2.5h9v-2.5" stroke="#87bd45" stroke-width="1.1" fill="none"/><path d="M132.6 25.9A6.6 6.6 0 1 1 138 30.4" stroke="#a6a6a0" stroke-width="1.25" fill="none"/><path d="M134.8 30.0L138.3 26.9L138.3 33.1z" fill="#a6a6a0"/><g fill="#a6a6a0"><rect x="169" y="21" width="2" height="3"/><rect x="172" y="21" width="13" height="3"/><rect x="169" y="26" width="10" height="3"/><rect x="180" y="26" width="2" height="3"/><rect x="183" y="26" width="2" height="3"/></g><rect x="15.6" y="65.75" width="10.8" height="7.5" rx="0.4" fill="#35362f" stroke="#a6a6a0" stroke-width="1.6"/><path d="M17.7 65.2V63.1a3.3 3.3 0 0 1 6.6 0V65.2" fill="none" stroke="#a6a6a0" stroke-width="1.7"/><g fill="#b4b4ae"><rect x="18.1" y="67.1" width="1.2" height="1.2"/><rect x="18.1" y="69.2" width="1.2" height="1.2"/><rect x="18.1" y="71.3" width="1.2" height="1.2"/></g><path d="M142.8 59.0L134 68.0H138.6L135 75.0L143.8 66.0H139.4z" fill="#a6a6a0"/></svg>
<div class="abs" style="left:51px;top:16px;height:20px;line-height:20px;font-size:12.6px;color:#87bd45;letter-spacing:1.5px;-webkit-text-stroke:0.35px #87bd45;white-space:nowrap">Aa</div>
<div class="lbl" style="top:15px">Find What:</div>
<div class="lbl" style="top:57px;letter-spacing:-0.12px">Replace With:</div>
<div class="abs" style="left:287px;top:13px;width:111px;height:23px;background:#40413b;border-radius:3px"></div>
<div class="abs" style="left:288px;top:13px;height:24px;line-height:24px;font-family:'Liberation Mono',monospace;font-size:16px;letter-spacing:-0.6px;color:#f8f8f2;white-space:pre">Boxy<span style="color:#7a7b74">·</span>Monokai</div>
<div class="ul" style="top:41px"></div>
<div class="ul" style="top:83px"></div>
<svg class="abs" style="left:1364px;top:17.5px" width="5" height="14" viewBox="0 0 5 14"><g fill="#a4a49e"><circle cx="2.5" cy="2" r="1.5"/><circle cx="2.5" cy="7" r="1.5"/><circle cx="2.5" cy="12" r="1.5"/></g></svg>
<svg class="abs" style="left:1364px;top:59.5px" width="5" height="14" viewBox="0 0 5 14"><g fill="#a4a49e"><circle cx="2.5" cy="2" r="1.5"/><circle cx="2.5" cy="7" r="1.5"/><circle cx="2.5" cy="12" r="1.5"/></g></svg>
<div class="bt" style="left:1390px;top:6px">Find</div>
<div class="bt" style="left:1486px;top:6px;letter-spacing:-0.25px">Replace</div>
<div class="bt" style="left:1390px;top:48px">Find All</div>
<div class="bt" style="left:1486px;top:48px;letter-spacing:-0.1px">Replace All</div>
<svg class="abs" style="left:1585px;top:9.2px" width="9" height="9" viewBox="0 0 9 9"><path d="M1 1l7 7M8 1l-7 7" stroke="#b0b0aa" stroke-width="1" fill="none"/></svg>
</div>
<div id="status" class="abs">
<svg class="abs" style="left:7px;top:5.8px" width="13" height="11" viewBox="0 0 13 11"><rect x="0" y="0" width="12.2" height="10.2" rx="1" fill="#a2a29c"/><rect x="1.2" y="7.3" width="9.8" height="1.5" fill="#4a4b45"/></svg>
<div class="abs" style="left:26px;top:0;white-space:nowrap;letter-spacing:0.107px">master*, <span style="letter-spacing:-0.27px">INSERT MODE,</span> 2 of 7 errors: Strings must use <span style="letter-spacing:0.44px">singlequote,</span> Line 7, Column 5</div>
<div class="abs" style="left:1244.5px;top:0;white-space:nowrap;letter-spacing:-0.50px">UTF-8</div>
<div class="abs" style="left:1330.0px;top:0;white-space:nowrap;letter-spacing:0.50px">Windows</div>
<div class="abs" style="left:1427.0px;top:0;white-space:nowrap;letter-spacing:-0.27px">Spaces: 2</div>
<div class="abs" style="left:1522.0px;top:0;white-space:nowrap;letter-spacing:-0.20px">JavaScript</div>
</div>
</body></html>
